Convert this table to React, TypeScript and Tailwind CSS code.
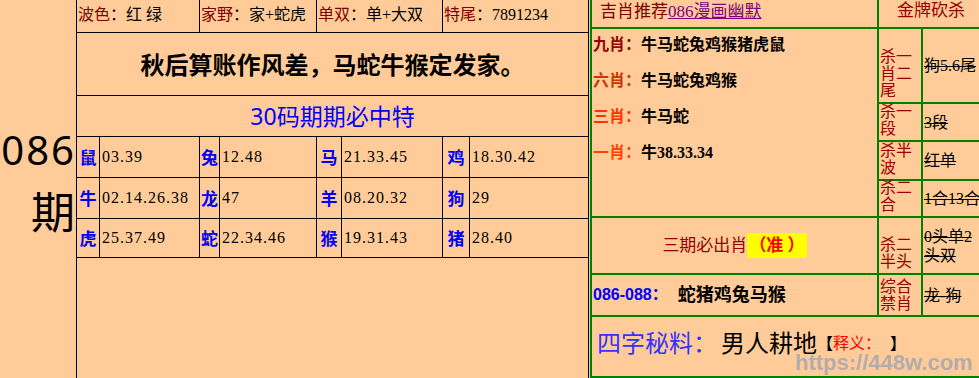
const rows = [
	[['鼠', '03.39'], ['兔', '12.48'], ['马', '21.33.45'], ['鸡', '18.30.42']],
	[['牛', '02.14.26.38'], ['龙', '47'], ['羊', '08.20.32'], ['狗', '29']],
	[['虎', '25.37.49'], ['蛇', '22.34.46'], ['猴', '19.31.43'], ['猪', '28.40']],
];
const colW = [
	['w-[23px]', 'w-[100px]'],
	['w-[20px]', 'w-[97px]'],
	['w-[25px]', 'w-[101px]'],
	['w-[27px]', 'flex-1'],
];
const rowH = ['h-[41px]', 'h-[41px]', 'h-[39px]'];

const kills = [
	['杀一肖二尾', '狗5.6尾'],
	['杀一段', '3段'],
	['杀半波', '红单'],
	['杀二合', '1合13合'],
];

function Label({ text }: { text: string }) {
	return (
		<div className="bg-[#ffcc99] flex items-end pb-[3px] pl-[1px] text-[16px] leading-[17px] text-[#990000]">
			<span className="w-[33px] break-all">{text}</span>
		</div>
	);
}

function Value({ text }: { text: string }) {
	return (
		<div className="bg-[#ffcc99] flex items-center pl-[1px] text-[16px] leading-[19px] text-black line-through">
			{text}
		</div>
	);
}

export default function App() {
	return (
		<div className="relative flex w-[979px] h-[378px] overflow-hidden bg-[#ffcc99] font-['Liberation_Serif','Noto_Sans_CJK_SC',serif] text-[16px] text-black">
			<div className="w-[76px] shrink-0 flex flex-col items-end pt-[127px] pr-[1px] font-['Noto_Sans','Noto_Sans_CJK_SC',sans-serif]">
				<div className="text-[40px] leading-[46px] tracking-[2px] mr-[-1px]">086</div>
				<div className="mt-[14px] text-[44px] leading-[46px] font-['Noto_Sans_CJK_SC',sans-serif]">期</div>
			</div>

			<div className="w-[513px] shrink-0 flex flex-col border-l border-r border-black">
				<div className="h-[33px] flex border-b border-black leading-[30px]">
					<div className="w-[123px] border-r border-black pl-[1px]">
						<span className="text-[#800000]">波色</span>：红 绿
					</div>
					<div className="w-[117px] border-r border-black pl-[1px]">
						<span className="text-[#800000]">家野</span>：家+蛇虎
					</div>
					<div className="w-[126px] border-r border-black pl-[1px]">
						<span className="text-[#800000]">单双</span>：单+大双
					</div>
					<div className="flex-1 pl-[1px]">
						<span className="text-[#800000]">特尾</span>：7891234
					</div>
				</div>
				<div className="h-[63px] flex items-center justify-center border-b border-black text-[24px] font-bold font-['Noto_Sans_CJK_SC',sans-serif]">
					秋后算账作风差，马蛇牛猴定发家。
				</div>
				<div className="h-[41px] flex items-center justify-center border-b border-black text-[23px] text-[#0000ff] font-['Noto_Sans','Noto_Sans_CJK_SC',sans-serif]">
					30码期期必中特
				</div>
				{rows.map((row, i) => (
					<div key={i} className={`${rowH[i]} flex border-b border-black`}>
						{row.map(([animal, nums], j) => (
							<div key={j} className="contents">
								<div className={`${colW[j][0]} border-r border-black flex items-center justify-center text-[17px] font-bold text-[#0000ff] font-['Noto_Sans_CJK_SC',sans-serif]`}>
									{animal}
								</div>
								<div className={`${colW[j][1]} ${j < 3 ? 'border-r border-black' : ''} flex items-center pl-[2px] tracking-[1px]`}>
									{nums}
								</div>
							</div>
						))}
					</div>
				))}
			</div>

			<div className="ml-[1px] w-[395px] shrink-0 grid grid-cols-[285px_42px_1fr] grid-rows-[27px_73px_36px_37px_35px_55px_40px_59px] gap-[2px] px-[2px] pb-[2px] bg-[#008000]">
				<div className="bg-[#ffcc99] pl-[8px] text-[17px] leading-[24px] text-[#800000]">
					吉肖推荐<span className="text-[#800080] underline">086漫画幽默</span>
				</div>
				<div className="col-span-2 bg-[#ffcc99] text-center text-[17px] leading-[22px] text-[#990000]">
					金牌砍杀
				</div>
				<div className="row-span-4 bg-[#ffcc99] pl-[1px] text-[16px] leading-[36px] font-bold">
					<div className="-mt-[2px]">
						<div><span className="text-[#990000]">九肖：</span>牛马蛇兔鸡猴猪虎鼠</div>
						<div><span className="text-[#cc3300]">六肖：</span>牛马蛇兔鸡猴</div>
						<div><span className="text-[#ff3300]">三肖：</span>牛马蛇</div>
						<div><span className="text-[#ff4400]">一肖：</span>牛38.33.34</div>
					</div>
				</div>
				{kills.map(([l, v]) => (
					<div key={l} className="contents">
						<Label text={l} />
						<Value text={v} />
					</div>
				))}
				<div className="bg-[#ffcc99] flex items-center justify-center text-[17px] text-[#990000]">
					三期必出肖<span className="bg-[#ffff00] text-[#ff0000] font-bold px-[2px]">（准 ）</span>
				</div>
				<Label text="杀二半头" />
				<div className="bg-[#ffcc99] flex items-center pl-[1px] text-[16px] leading-[19px] line-through">
					<span className="w-[56px]">0头单2头双</span>
				</div>
				<div className="bg-[#ffcc99] flex items-center pl-[1px]">
					<span className="text-[#0000ff] font-bold font-['Liberation_Sans','Noto_Sans_CJK_SC',sans-serif]">086-088：</span>
					<span className="ml-[10px] text-[18px] font-bold">蛇猪鸡兔马猴</span>
				</div>
				<Label text="综合禁肖" />
				<Value text="龙-狗" />
				<div className="col-span-3 bg-[#ffcc99] flex items-center pb-[6px] pl-[5px]">
					<span className="text-[24px] text-[#3333ff]">四字秘料：</span>
					<span className="ml-[4px] text-[24px]">男人耕地</span>
					<span className="font-bold">【</span>
					<span className="text-[#ff0000]">释义：</span>
					<span className="ml-[9px] font-bold">】</span>
				</div>
			</div>

			<div className="absolute left-[795px] top-[346px] text-[22px] font-bold text-[#9ea4b4]/80 font-['Liberation_Sans',sans-serif]">
				https://448w.com
			</div>
		</div>
	);
}
